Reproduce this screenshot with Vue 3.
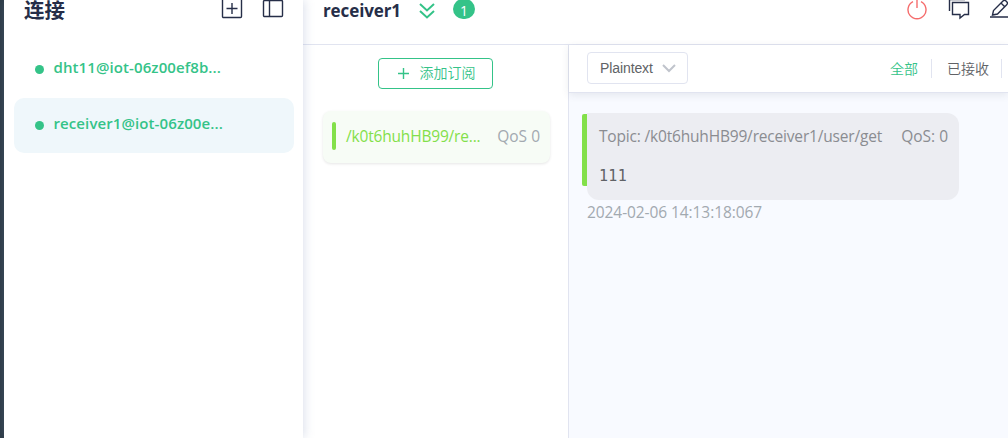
<script setup>
import { ref } from "vue";

const connections = ref([
  { id: 1, name: "dht11@iot-06z00ef8b...", active: false },
  { id: 2, name: "receiver1@iot-06z00e...", active: true },
]);

const subscription = { topic: "/k0t6huhHB99/re...", qos: 0 };

const message = {
  topic: "/k0t6huhHB99/receiver1/user/get",
  qos: 0,
  payload: "111",
  createAt: "2024-02-06 14:13:18:067",
};
</script>

<template>
  <div class="page">
    <div class="rail"></div>

    <!-- Connection list -->
    <aside class="sidebar">
      <header class="sidebar-header">
        <h1>连接</h1>
        <svg class="icon-new" width="22" height="22" viewBox="0 0 22 22">
          <rect x="1.5" y="1.5" width="19" height="19" rx="1" />
          <path d="M11 6v11M5.5 11.5h11" />
        </svg>
        <svg class="icon-layout" width="22" height="20" viewBox="0 0 22 20">
          <rect x="1.5" y="2.5" width="19" height="16" rx="1" />
          <path d="M7.5 2.5v16" />
        </svg>
      </header>
      <ul class="connections">
        <li
          v-for="item in connections"
          :key="item.id"
          :class="{ active: item.active }"
        >
          <span class="dot"></span>
          <span class="name">{{ item.name }}</span>
        </li>
      </ul>
    </aside>

    <main class="main">
      <header class="topbar">
        <h2>receiver1</h2>
        <svg class="icon-down" width="18" height="18" viewBox="0 0 18 18">
          <path d="M2 2l7 6.500L16 2M2 9l7 6.500L16 9" />
        </svg>
        <span class="badge">1</span>
        <div class="actions">
          <svg class="power" width="22" height="22" viewBox="0 0 22 22">
            <path d="M7 3.700a9 9 0 1 0 8 0M11 0v10" />
          </svg>
          <svg class="chat" width="22" height="22" viewBox="0 0 22 22">
            <path d="M1.500 13V1.500H17" />
            <path d="M4.500 4.500h16v12h-4l-4.500 3.500v-3.500h-7.500z" />
          </svg>
          <svg class="edit" width="22" height="22" viewBox="0 0 22 22">
            <path d="M2.500 17l1-4.500L13 3q1.500-1.500 3 0l.7.7q1.500 1.500 0 3L7.500 16zM11 5l3.700 3.700M0 19h22" />
          </svg>
        </div>
      </header>

      <div class="content">
        <!-- Subscriptions -->
        <section class="subs">
          <button class="add-btn">
            <svg width="13" height="13" viewBox="0 0 13 13">
              <path d="M6.500 1v11M1 6.500h11" />
            </svg>
            <span>添加订阅</span>
          </button>
          <div class="sub-card">
            <span class="bar"></span>
            <span class="topic">{{ subscription.topic }}</span>
            <span class="qos">QoS {{ subscription.qos }}</span>
          </div>
        </section>

        <!-- Messages -->
        <section class="messages">
          <div class="filter">
            <div class="select">
              <span>Plaintext</span>
              <svg width="14" height="9" viewBox="0 0 14 9">
                <path d="M1 1l6 6 6-6" />
              </svg>
            </div>
            <div class="tabs">
              <span class="tab active">全部</span>
              <span class="tab">已接收</span>
            </div>
          </div>
          <div class="message">
            <span class="mark"></span>
            <div class="bubble">
              <p class="meta">
                <span class="msg-topic">Topic: {{ message.topic }}</span>
                <span>QoS: {{ message.qos }}</span>
              </p>
              <p class="payload">{{ message.payload }}</p>
            </div>
            <p class="time">{{ message.createAt }}</p>
          </div>
        </section>
      </div>
    </main>
  </div>
</template>

<style>
body {
  overflow: hidden;
}
</style>

<style scoped>
.page {
  display: flex;
  width: 1008px;
  height: 438px;
  overflow: hidden;
  background: #fff;
  font-family: "Open Sans", "Noto Sans CJK SC", sans-serif;
}
.page * {
  box-sizing: border-box;
}
h1,
h2,
p,
ul {
  margin: 0;
  padding: 0;
}
svg {
  display: block;
  flex: none;
  fill: none;
  stroke: #262e48;
  stroke-width: 1.4;
}
span,
h1,
h2,
p {
  white-space: nowrap;
}

.rail {
  flex: none;
  width: 4px;
  background: #2c3a45;
}

/* sidebar */
.sidebar {
  z-index: 1;
  flex: none;
  width: 299px;
  background: #fff;
  box-shadow: 1px 0 10px rgba(130, 145, 185, 0.3);
}
.sidebar-header {
  display: flex;
  align-items: flex-start;
  height: 42px;
  padding-left: 20px;
}
.sidebar-header h1 {
  width: 197px;
  font-size: 20.5px;
  line-height: 21px;
  font-weight: 700;
  color: #262e48;
}
.icon-new {
  margin-top: -3px;
}
.icon-layout {
  margin: -2px 0 0 19px;
}
.connections {
  display: flex;
  flex-direction: column;
  gap: 1px;
  padding: 0 9px 0 10px;
  list-style: none;
}
.connections li {
  display: flex;
  align-items: center;
  height: 55px;
  padding-left: 21px;
  border-radius: 10px;
}
.connections li.active {
  background: #eff7fb;
}
.dot {
  width: 9px;
  height: 9px;
  margin-right: 9.5px;
  border-radius: 50%;
  background: #34c388;
}
.name {
  margin-top: -5px;
  font-size: 15px;
  letter-spacing: 0.1px;
  line-height: 20px;
  font-weight: 600;
  color: #34c388;
}

/* top bar */
.main {
  display: flex;
  flex: 1;
  flex-direction: column;
  min-width: 0;
}
.topbar {
  display: flex;
  flex: none;
  align-items: flex-start;
  height: 45px;
  padding-left: 20px;
  border-bottom: 1px solid #e1e4f0;
}
.topbar h2 {
  width: 95px;
  margin-top: -2px;
  font-size: 17px;
  letter-spacing: -0.1px;
  line-height: 25px;
  font-weight: 700;
  color: #262e48;
}
.icon-down {
  margin-top: 2px;
  stroke: #34c388;
  stroke-width: 2;
}
.badge {
  width: 22px;
  height: 20px;
  margin: -1px 0 0 17px;
  border-radius: 10px;
  background: #34c388;
  color: #fff;
  font-size: 14px;
  line-height: 23px;
  text-align: center;
}
.actions {
  display: flex;
  gap: 20px;
  margin: -2px -4px 0 auto;
}
.power {
  stroke: #f56c6c;
}

.content {
  display: flex;
  flex: 1;
}

/* subscriptions */
.subs {
  flex: none;
  width: 266px;
  padding: 13px 18px 0 20px;
  border-right: 1px solid #e1e4f0;
}
.add-btn {
  display: flex;
  align-items: center;
  width: 115px;
  height: 31px;
  margin-left: 55px;
  padding: 0 0 0 18px;
  border: 1px solid #34c388;
  border-radius: 4px;
  background: #fff;
  color: #34c388;
  font-family: inherit;
  font-size: 14px;
  font-weight: 350;
}
.add-btn svg {
  margin-right: 9.5px;
  stroke: #34c388;
}
.add-btn span {
  margin-top: -3px;
}
.sub-card {
  display: flex;
  align-items: center;
  height: 52px;
  margin-top: 22px;
  padding: 0 10px 0 9px;
  border-radius: 8px;
  background: #f7fcf6;
  box-shadow: 0 1px 3px rgba(0, 0, 0, 0.1);
  font-size: 15.5px;
}
.bar {
  width: 4px;
  height: 28px;
  margin: -2px 10px 0 0;
  border-radius: 2px;
  background: #83e04a;
}
.topic {
  margin-top: -2px;
  letter-spacing: -0.18px;
  color: #83e04a;
}
.qos {
  margin: -2px 0 0 auto;
  color: #a2a9b0;
}

/* messages */
.messages {
  flex: 1;
  background: #f8faff;
}
.filter {
  display: flex;
  align-items: flex-start;
  height: 48px;
  padding: 7px 0 0 18px;
  border-bottom: 1px solid #e1e4f0;
  background: #fff;
  box-shadow: 0 2px 8px rgba(50, 60, 80, 0.1);
}
.select {
  display: flex;
  align-items: center;
  justify-content: space-between;
  width: 101px;
  height: 32px;
  padding: 0 11px 0 12px;
  border: 1px solid #e1e4f0;
  border-radius: 4px;
  color: #606266;
  font-family: "Liberation Sans", sans-serif;
  font-size: 14px;
  letter-spacing: -0.1px;
}
.select svg {
  stroke: #c0c4cc;
  stroke-width: 2;
}
.tabs {
  display: flex;
  margin: 7px 6px 0 auto;
}
.tab {
  padding: 0 12px 0 15px;
  border-right: 1px solid #e1e4f0;
  color: #606266;
  font-size: 14px;
  line-height: 19px;
  font-weight: 350;
}
.tab.active {
  padding-right: 13px;
  color: #34c388;
}
.message {
  position: relative;
  margin: 20px 0 0 18px;
}
.mark {
  position: absolute;
  top: 1px;
  left: -5px;
  width: 5px;
  height: 72px;
  border-radius: 2px 0 0 2px;
  background: #83e04a;
}
.bubble {
  width: 372px;
  height: 87px;
  padding: 11px 11px 0 12px;
  border-radius: 0 12px 12px 12px;
  background: #ecedf2;
}
.meta {
  display: flex;
  justify-content: space-between;
  color: #8a8c91;
  font-size: 15.5px;
  line-height: 24px;
}
.msg-topic {
  letter-spacing: -0.18px;
}
.payload {
  margin-top: 19px;
  color: #606266;
  font-family: "DejaVu Sans Mono", monospace;
  font-size: 15px;
  letter-spacing: 0.3px;
  line-height: 18px;
}
.time {
  color: #a2a9b0;
  font-size: 15.5px;
  letter-spacing: -0.08px;
  line-height: 25px;
}
</style>
